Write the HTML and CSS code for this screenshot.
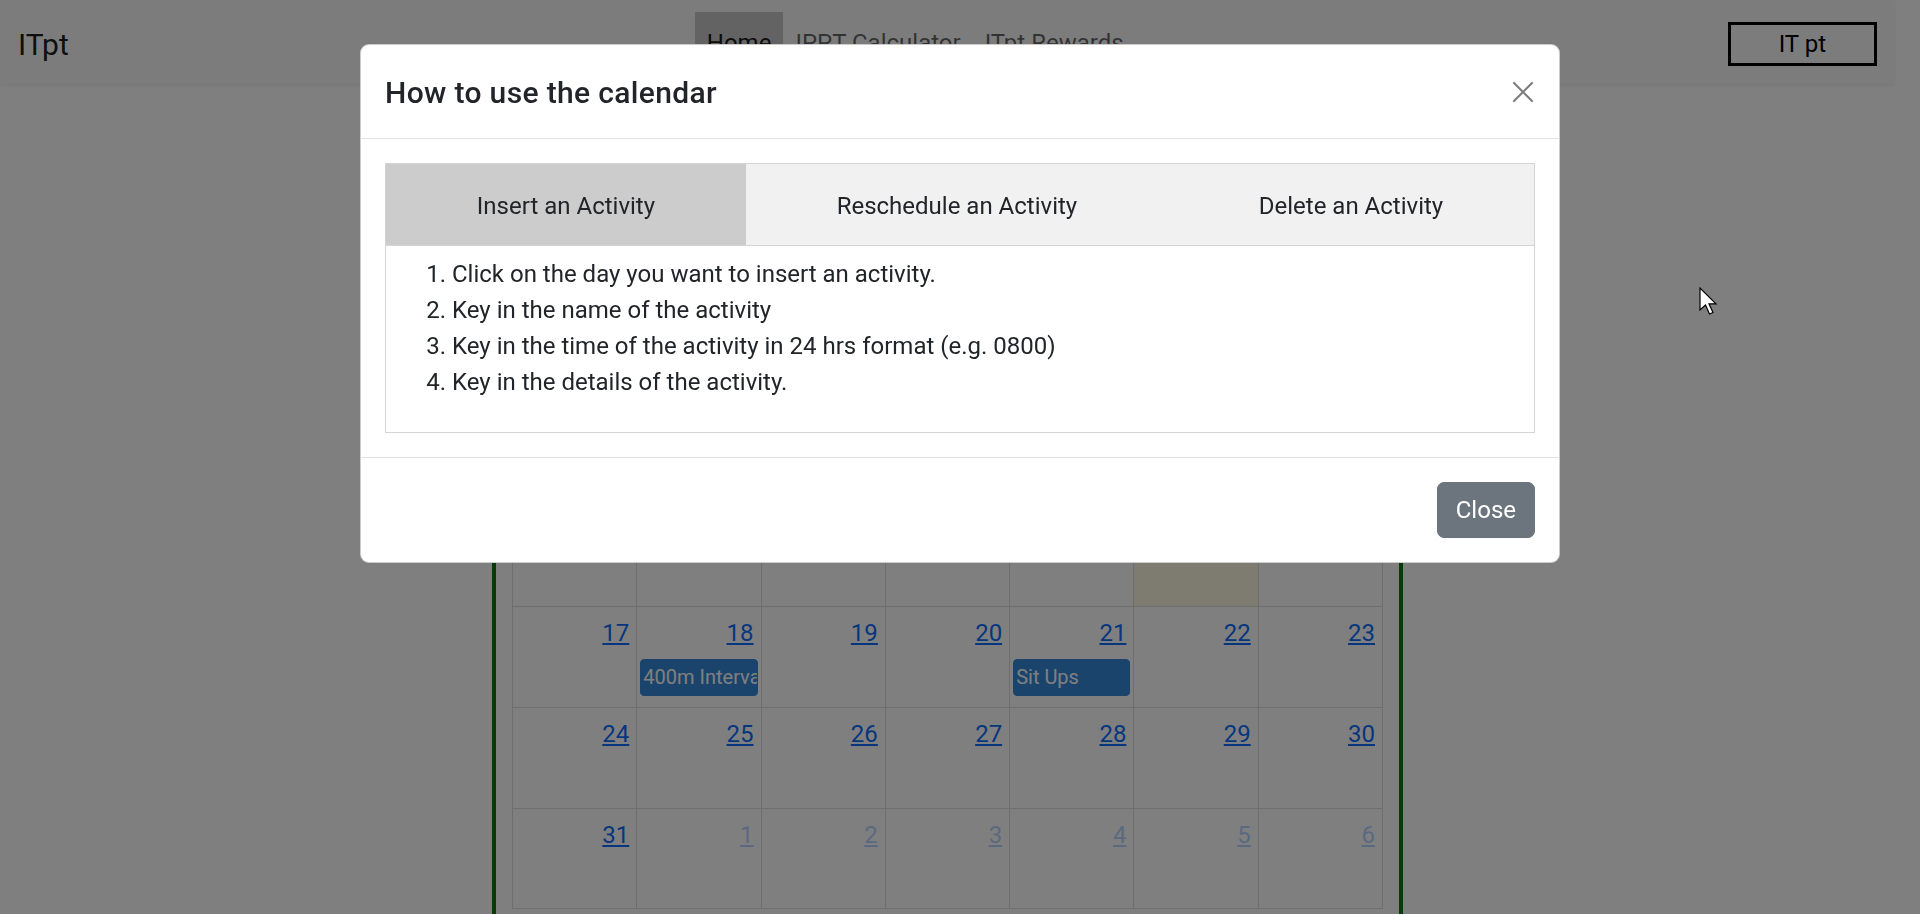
FILE: index.html
```html
<!DOCTYPE html>
<html lang="en">
<head>
<meta charset="utf-8">
<title>ITpt - Calendar</title>
<link rel="stylesheet" href="styles.css">
</head>
<body class="modal-open">
  <nav class="navbar">
    <a class="brand" href="#">ITpt</a>
    <div class="nav-center">
      <ul class="nav-links">
        <li><a class="nav-link active" href="#">Home</a></li>
        <li><a class="nav-link" href="#">IPPT Calculator</a></li>
        <li><a class="nav-link" href="#">ITpt Rewards</a></li>
      </ul>
    </div>
    <button class="btn-user" type="button">IT pt</button>
  </nav>

  <main class="cal-wrap">
    <div class="cal">
      <div class="cal-row">
        <div class="day"></div><div class="day"></div><div class="day"></div><div class="day"></div><div class="day"></div><div class="day"></div><div class="day"></div>
      </div>
      <div class="cal-row">
        <div class="day"></div><div class="day"></div><div class="day"></div><div class="day"></div><div class="day"></div><div class="day"></div><div class="day"></div>
      </div>
      <div class="cal-row">
        <div class="day"></div><div class="day"></div><div class="day"></div><div class="day"></div><div class="day"></div><div class="day today"></div><div class="day"></div>
      </div>
      <div class="cal-row">
        <div class="day"><a class="num" href="#">17</a></div>
        <div class="day"><a class="num" href="#">18</a><div class="event">400m Intervals</div></div>
        <div class="day"><a class="num" href="#">19</a></div>
        <div class="day"><a class="num" href="#">20</a></div>
        <div class="day"><a class="num" href="#">21</a><div class="event">Sit Ups</div></div>
        <div class="day"><a class="num" href="#">22</a></div>
        <div class="day"><a class="num" href="#">23</a></div>
      </div>
      <div class="cal-row">
        <div class="day"><a class="num" href="#">24</a></div>
        <div class="day"><a class="num" href="#">25</a></div>
        <div class="day"><a class="num" href="#">26</a></div>
        <div class="day"><a class="num" href="#">27</a></div>
        <div class="day"><a class="num" href="#">28</a></div>
        <div class="day"><a class="num" href="#">29</a></div>
        <div class="day"><a class="num" href="#">30</a></div>
      </div>
      <div class="cal-row">
        <div class="day"><a class="num" href="#">31</a></div>
        <div class="day other"><a class="num" href="#">1</a></div>
        <div class="day other"><a class="num" href="#">2</a></div>
        <div class="day other"><a class="num" href="#">3</a></div>
        <div class="day other"><a class="num" href="#">4</a></div>
        <div class="day other"><a class="num" href="#">5</a></div>
        <div class="day other"><a class="num" href="#">6</a></div>
      </div>
    </div>
  </main>

  <div class="backdrop"></div>

  <div class="modal">
    <div class="modal-dialog">
      <div class="modal-content">
        <div class="modal-header">
          <h5 class="modal-title">How to use the calendar</h5>
          <button class="btn-close" type="button" aria-label="Close">
            <svg width="24" height="24" viewBox="0 0 24 24"><path d="M3 3 L21 21 M21 3 L3 21" stroke="#000" stroke-width="2.2" stroke-linecap="round" fill="none"/></svg>
          </button>
        </div>
        <div class="modal-body">
          <div class="tabs-box">
            <div class="tabs">
              <button class="tab active" type="button">Insert an Activity</button>
              <button class="tab" type="button">Reschedule an Activity</button>
              <button class="tab" type="button">Delete an Activity</button>
            </div>
            <div class="tab-pane">
              <ol class="steps">
                <li>Click on the day you want to insert an activity.</li>
                <li>Key in the name of the activity</li>
                <li>Key in the time of the activity in 24 hrs format (e.g. 0800)</li>
                <li>Key in the details of the activity.</li>
              </ol>
            </div>
          </div>
        </div>
        <div class="modal-footer">
          <button class="btn-secondary" type="button">Close</button>
        </div>
      </div>
    </div>
  </div>

  <svg class="cursor" width="20" height="30" viewBox="0 0 20 30">
    <path d="M1 1 L1 23 L6.5 18 L10.5 27 L14 25.5 L10 16.8 L17 16.8 Z" fill="#fff" stroke="#000" stroke-width="1.2" stroke-linejoin="miter"/>
  </svg>
</body>
</html>
```

FILE: styles.css
```css
* { box-sizing: border-box; }

html, body {
  margin: 0;
  height: 100%;
}

body {
  font-family: Roboto, "Liberation Sans", Arial, sans-serif;
  font-size: 24px;
  line-height: 36px;
  color: #212529;
  background: #fff;
  padding-right: 25px;
  overflow: hidden;
}

/* ---------- navbar ---------- */
.navbar {
  display: flex;
  align-items: center;
  height: 84px;
  padding: 0 18px;
  background: #f8f9fa;
  box-shadow: 0 2px 3px rgba(0,0,0,0.06);
}

.brand {
  font-size: 30px;
  line-height: 45px;
  margin-top: 4px;
  color: rgba(0,0,0,0.9);
  text-decoration: none;
  margin-right: 24px;
}

.nav-center {
  flex: 1 1 auto;
  display: flex;
  justify-content: center;
  padding-left: 10px;
}

.nav-links {
  display: flex;
  list-style: none;
  margin: 0;
  padding: 0;
}

.nav-link {
  display: block;
  padding: 13px 12px 11px;
  font-size: 24px;
  line-height: 36px;
  color: rgba(0,0,0,0.6);
  text-decoration: none;
}

.nav-link.active {
  background: #c6c6c6;
  color: rgba(0,0,0,0.9);
}

.btn-user {
  font-family: inherit;
  font-size: 24px;
  line-height: 36px;
  padding: 1px 48px;
  margin-top: 3px;
  border: 3px solid #000;
  background: transparent;
  color: #000;
}

/* ---------- calendar ---------- */
.cal-wrap {
  width: 911px;
  margin: 0 auto;
  min-height: 1000px;
  padding: 219px 16px 40px;
  border-left: 4px solid #0a780a;
  border-right: 4px solid #0a780a;
}

.cal {
  border-left: 1px solid #ddd;
  border-bottom: 1px solid #ddd;
}

.cal-row {
  display: grid;
  grid-template-columns: repeat(7, 1fr);
  height: 101px;
  border-top: 1px solid #ddd;
}

.cal-row:last-child { height: 100px; }

.day {
  border-right: 1px solid #ddd;
  padding-top: 8px;
  overflow: hidden;
  min-width: 0;
}

.day.today { background: #fcf8e3; }

.num {
  display: block;
  text-align: right;
  padding-right: 7px;
  font-size: 24px;
  line-height: 36px;
  color: #0d6efd;
  text-decoration: underline;
}

.day.other .num { opacity: 0.3; }

.event {
  margin: 8px 3px 0;
  padding: 0 2px;
  background: #3788d8;
  border: 1px solid #3788d8;
  border-radius: 4px;
  color: #fff;
  font-size: 20px;
  line-height: 35px;
  white-space: nowrap;
  overflow: hidden;
}

/* ---------- modal ---------- */
.backdrop {
  position: fixed;
  inset: 0;
  background: rgba(0,0,0,0.5);
}

.modal {
  position: fixed;
  inset: 0;
  overflow: hidden;
}

.modal-dialog {
  width: 1200px;
  margin: 44px auto 0;
}

.modal-content {
  background: #fff;
  border: 1px solid rgba(0,0,0,0.2);
  border-radius: 9px;
}

.modal-header {
  display: flex;
  align-items: center;
  padding: 24px;
  border-bottom: 1px solid #dee2e6;
}

.modal-title {
  margin: 0;
  font-size: 30px;
  font-weight: 500;
  line-height: 45px;
  letter-spacing: 0.35px;
  color: #212529;
  position: relative;
  top: 1px;
}

.btn-close {
  margin-left: auto;
  width: 24px;
  height: 24px;
  padding: 0;
  border: 0;
  background: none;
  opacity: 0.5;
  display: flex;
}

.modal-body {
  padding: 24px;
}

.tabs-box {
  border: 1px solid #d4d4d4;
}

.tabs {
  display: flex;
  background: #f1f1f1;
  border-bottom: 1px solid #d4d4d4;
}

.tab {
  flex: 1 1 auto;
  font-family: inherit;
  font-size: 24px;
  line-height: 36px;
  padding: 24px 18px 21px;
  border: 0;
  background: #f1f1f1;
  color: #212529;
  text-align: center;
}

.tab.active { background: #cccccc; }

.tab-pane {
  padding: 10px 18px 8px;
}

.steps {
  margin: 0 0 24px;
  padding-left: 48px;
}

.modal-footer {
  display: flex;
  justify-content: flex-end;
  padding: 18px;
  border-top: 1px solid #dee2e6;
}

.btn-secondary {
  margin: 6px;
  font-family: inherit;
  font-size: 24px;
  line-height: 36px;
  padding: 9px 18px;
  border: 1.5px solid #6c757d;
  background: #6c757d;
  color: #fff;
  border-radius: 7px;
}

.cursor {
  position: fixed;
  left: 1699px;
  top: 287px;
}
```
